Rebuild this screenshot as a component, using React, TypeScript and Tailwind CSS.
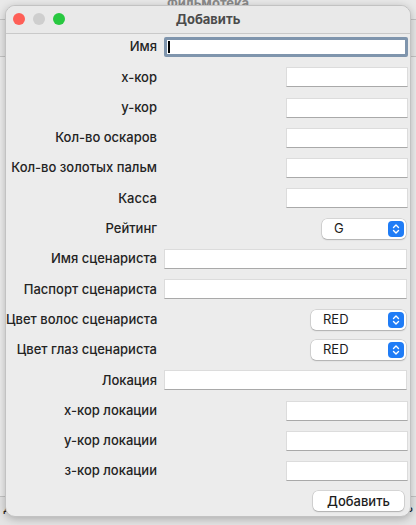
import React from 'react';

const font = { fontFamily: 'Inter, "Noto Sans", sans-serif' };

type Row =
  | { label: string; kind: 'wide' | 'short' | 'focus' }
  | { label: string; kind: 'select'; value: string; w: string };

const ROWS: Row[] = [
  { label: 'Имя', kind: 'focus' },
  { label: 'х-кор', kind: 'short' },
  { label: 'у-кор', kind: 'short' },
  { label: 'Кол-во оскаров', kind: 'short' },
  { label: 'Кол-во золотых пальм', kind: 'short' },
  { label: 'Касса', kind: 'short' },
  { label: 'Рейтинг', kind: 'select', value: 'G', w: 'w-[84px]' },
  { label: 'Имя сценариста', kind: 'wide' },
  { label: 'Паспорт сценариста', kind: 'wide' },
  { label: 'Цвет волос сценариста', kind: 'select', value: 'RED', w: 'w-[95px]' },
  { label: 'Цвет глаз сценариста', kind: 'select', value: 'RED', w: 'w-[95px]' },
  { label: 'Локация', kind: 'wide' },
  { label: 'х-кор локации', kind: 'short' },
  { label: 'у-кор локации', kind: 'short' },
  { label: 'з-кор локации', kind: 'short' },
];

const Stepper = () => (
  <div className="w-[16px] h-[16px] rounded-[4px] bg-[#1f7cf6] flex items-center justify-center">
    <svg width="10" height="12" viewBox="0 0 10 12" fill="none" stroke="white" strokeWidth="1.4" strokeLinecap="round" strokeLinejoin="round">
      <path d="M2.5 4.5 L5 2 L7.5 4.5" />
      <path d="M2.5 7.5 L5 10 L7.5 7.5" />
    </svg>
  </div>
);

const Field = ({ row }: { row: Row }) => {
  if (row.kind === 'focus') {
    return (
      <div className="h-[20px] w-[244px] rounded-[2px] border-[3px] border-[#7f95ad] bg-white flex items-center pl-[1px]">
        <div className="w-[1.5px] h-[12px] bg-black" />
      </div>
    );
  }
  if (row.kind === 'wide') {
    return <div className="h-[20px] w-[243px] bg-white border border-[#dcdcdc] border-b-[#a9a9a9]" />;
  }
  if (row.kind === 'short') {
    return <div className="h-[20px] w-[122px] ml-auto bg-white border border-[#dcdcdc] border-b-[#a9a9a9]" />;
  }
  return (
    <div
      className={`${row.w} h-[20px] ml-auto mr-[2px] bg-white rounded-[5px] shadow-[0_0_0_0.5px_rgba(0,0,0,0.18),0_1px_1.5px_rgba(0,0,0,0.18)] flex items-center justify-between pl-[12px] pr-[2px] text-[13px] text-[#1d1d1d]`}
    >
      <span>{row.value}</span>
      <Stepper />
    </div>
  );
};

export default function App() {
  return (
    <div className="relative w-[416px] h-[525px] overflow-hidden bg-[#e4e4e4]" style={font}>
      {/* window behind */}
      <div className="h-[20px] border-b border-[#c4c4c4] bg-[#e9e9e9] flex justify-center">
        <span className="text-[13px] font-bold text-[#8a8a8a] -mt-[6px]">Фильмотека</span>
      </div>
      <div className="h-[37px] border-b border-[#c4c4c4] bg-[#e7e7e7]" />
      <div className="h-[440px] bg-[#ededed] border-b border-[#c4c4c4]" />
      <div className="flex justify-between px-[3px] text-[13px] text-[#222] leading-[20px]">
        <span>Д</span>
        <span>ь</span>
      </div>

      {/* dialog */}
      <div className="absolute left-[5px] top-[5px] w-[406px] h-[512px] rounded-[10px] bg-[#ececec] border border-[#c2c2c2] shadow-[0_2px_8px_rgba(0,0,0,0.25)] overflow-hidden flex flex-col">
        <div className="relative h-[28px] shrink-0 border-b border-[#c9c9c9] bg-[#e9e9e9] flex items-center justify-center">
          <div className="absolute left-[7px] top-[7px] flex gap-[8px]">
            <div className="w-[12px] h-[12px] rounded-full bg-[#fe5f57]" />
            <div className="w-[12px] h-[12px] rounded-full bg-[#cecece]" />
            <div className="w-[12px] h-[12px] rounded-full bg-[#28c840]" />
          </div>
          <span className="text-[13px] font-bold text-[#4b4b4b]">Добавить</span>
        </div>

        <div className="flex flex-col gap-[10.3px] pt-[3px] pr-[3px]">
          {ROWS.map((r) => (
            <div key={r.label} className="grid grid-cols-[151px_244px] gap-x-[7px] items-center h-[20px]">
              <span className="text-right text-[13px] font-medium text-[#232323] whitespace-nowrap">{r.label}</span>
              <Field row={r} />
            </div>
          ))}
          <div className="flex justify-end pr-[3px] h-[20px]">
            <button className="w-[91px] h-[20px] bg-white rounded-[5px] shadow-[0_0_0_0.5px_rgba(0,0,0,0.18),0_1px_1.5px_rgba(0,0,0,0.18)] text-[13px] font-medium text-[#1d1d1d]">
              Добавить
            </button>
          </div>
        </div>
      </div>
    </div>
  );
}
